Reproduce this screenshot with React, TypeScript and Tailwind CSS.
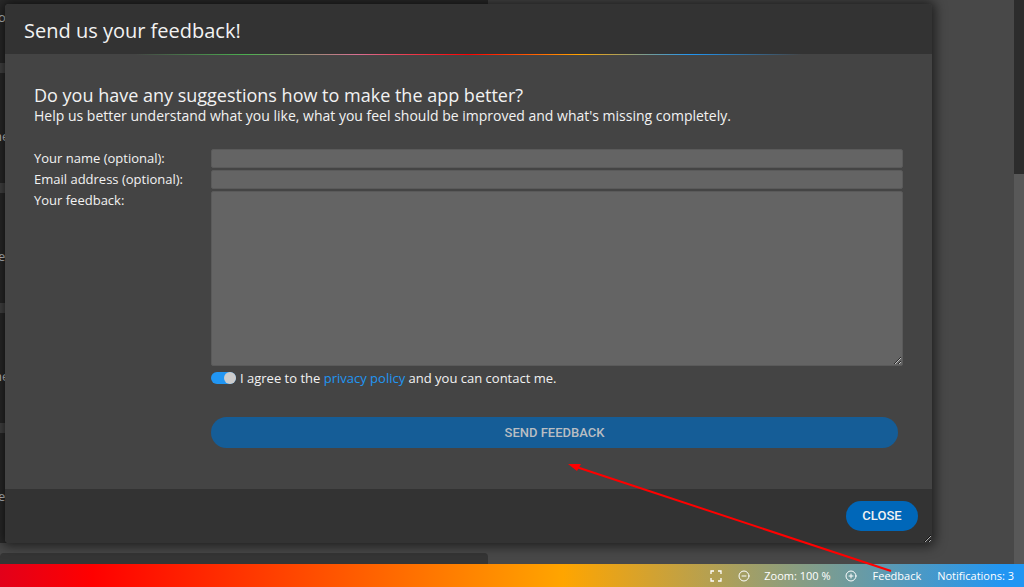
import { useState } from "react";
import { CircleMinus, CirclePlus } from "lucide-react";

const rows = [
  { text: "ne", className: "-ml-[6px]" },
  { text: "er", className: "-ml-[2px]" },
  { text: "ne", className: "-ml-[6px]" },
  { text: "er", className: "-ml-[2px]" },
];

function Backdrop() {
  return (
    <div className="flex h-full bg-[#484848]">
      <div className="flex w-[488px] flex-col gap-[10px] text-[13px] leading-5 text-[#d8d8d8]">
        <div className="h-[63px] shrink-0 bg-[#2b2b2b] pt-[7px]">
          <span className="-ml-[2px]">o</span>
        </div>
        {rows.map((row, i) => (
          <div key={i} className="h-[110px] shrink-0 bg-[#2b2b2b] pt-[53px]">
            <span className={row.className}>{row.text}</span>
          </div>
        ))}
        <div className="h-[110px] shrink-0 rounded-t bg-[#353535]" />
      </div>
      {/* Scroll bar of the page behind the dialog */}
      <div className="ml-auto flex w-[10px] flex-col bg-[#2c2c2c] pt-[174px]">
        <div className="flex-1 bg-[#585858]" />
      </div>
    </div>
  );
}

function FeedbackDialog() {
  const [agreed, setAgreed] = useState(true);
  const field =
    "block w-full rounded-xs border border-[#5a5a5a] bg-[#646464] px-1 text-[13px] text-[#eee] outline-none";

  return (
    <div
      role="dialog"
      aria-labelledby="feedback-title"
      className="absolute top-1 right-[92px] left-[5px] resize overflow-hidden rounded bg-[#444] shadow-[0_0_12px_3px_rgba(0,0,0,0.6)]"
    >
      <header className="h-[50px] bg-[#333] px-[19px] pt-[13px]">
        <h1 id="feedback-title" className="text-[20px] leading-7">
          Send us your feedback!
        </h1>
      </header>
      <div className="h-px bg-[linear-gradient(90deg,transparent_14%,#4caf50_26%,#d87093_38%,#ff0000_50%,#ffa500_62%,#2196f3_74%,transparent_86%)]" />

      <form
        className="px-[29px] pt-[28px] pb-[41px]"
        onSubmit={(e) => e.preventDefault()}
      >
        <h2 className="text-[18px] leading-6">
          Do you have any suggestions how to make the app better?
        </h2>
        <p className="text-[14px] leading-[18px]">
          Help us better understand what you like, what you feel should be
          improved and what's missing completely.
        </p>

        <div className="mt-6 grid grid-cols-[177px_1fr] gap-y-[2px] text-[13px] leading-[19px]">
          <label htmlFor="name">Your name (optional):</label>
          <input id="name" type="text" className={`${field} h-[19px]`} />
          <label htmlFor="email">Email address (optional):</label>
          <input id="email" type="email" className={`${field} h-[19px]`} />
          <label htmlFor="message">Your feedback:</label>
          <textarea id="message" className={`${field} h-[175px] resize`} />
        </div>

        <div className="mt-[2px] ml-[177px] flex h-5 items-center text-[13px] leading-5">
          <input
            id="agree"
            type="checkbox"
            checked={agreed}
            onChange={(e) => setAgreed(e.target.checked)}
            className="mr-1 flex h-3 w-[25px] shrink-0 appearance-none justify-start rounded-full bg-[#777] before:size-3 before:rounded-full before:bg-[#ccc] checked:justify-end checked:bg-[#2196f3]"
          />
          <label htmlFor="agree" className="whitespace-pre">
            I agree to the{" "}
            <a href="#privacy" className="text-[#2196f3]">
              privacy policy
            </a>{" "}
            and you can contact me.
          </label>
        </div>

        <button
          type="submit"
          className="mt-[29px] mr-[5px] ml-[177px] block h-[31px] w-[calc(100%-182px)] rounded-full bg-[#155d97] font-[Roboto] text-[13px] font-medium text-[#b9bec3]"
        >
          SEND FEEDBACK
        </button>
      </form>

      <footer className="flex h-[54px] items-center justify-end bg-[#333] px-[14px]">
        <button
          type="button"
          className="h-[30px] w-[72px] rounded-full bg-[#0067b9] font-[Roboto] text-[13px] font-medium"
        >
          CLOSE
        </button>
      </footer>
    </div>
  );
}

function StatusBar() {
  return (
    <footer className="flex h-[23px] shrink-0 items-center justify-end gap-4 bg-[linear-gradient(90deg,#e2001a_0%,#ff0000_9%,#ffa500_55%,#2196f3_98%)] px-[10px] text-[11px] leading-5 text-white">
      <button type="button" aria-label="Full screen">
        <svg width="12" height="12" viewBox="0 0 12 12" fill="none">
          <path
            d="M1 4V1H4M8 1H11V4M11 8V11H8M4 11H1V8"
            stroke="currentColor"
            strokeWidth="1.300"
          />
        </svg>
      </button>
      <div className="flex items-center gap-[14px]">
        <button type="button" aria-label="Zoom out">
          <CircleMinus size={12} strokeWidth={2} />
        </button>
        <span>Zoom: 100 %</span>
        <button type="button" aria-label="Zoom in">
          <CirclePlus size={12} strokeWidth={2} />
        </button>
      </div>
      <button type="button">Feedback</button>
      <button type="button">Notifications: 3</button>
    </footer>
  );
}

export default function App() {
  return (
    <div className="relative flex h-screen flex-col overflow-hidden font-['Open_Sans',sans-serif] text-[#f2f2f2]">
      <main className="relative min-h-0 flex-1 overflow-hidden">
        <Backdrop />
        <FeedbackDialog />
      </main>
      <StatusBar />
      {/* Arrow from the status bar entry to the dialog */}
      <svg
        aria-hidden
        className="pointer-events-none absolute right-[132px] bottom-[14px]"
        width="324"
        height="110"
        viewBox="0 0 324 110"
      >
        <path d="M10 4.500 L323 108" stroke="#f00" strokeWidth="2" />
        <path d="M0 1 L13 1 L9 8 Z" fill="#f00" />
      </svg>
    </div>
  );
}
